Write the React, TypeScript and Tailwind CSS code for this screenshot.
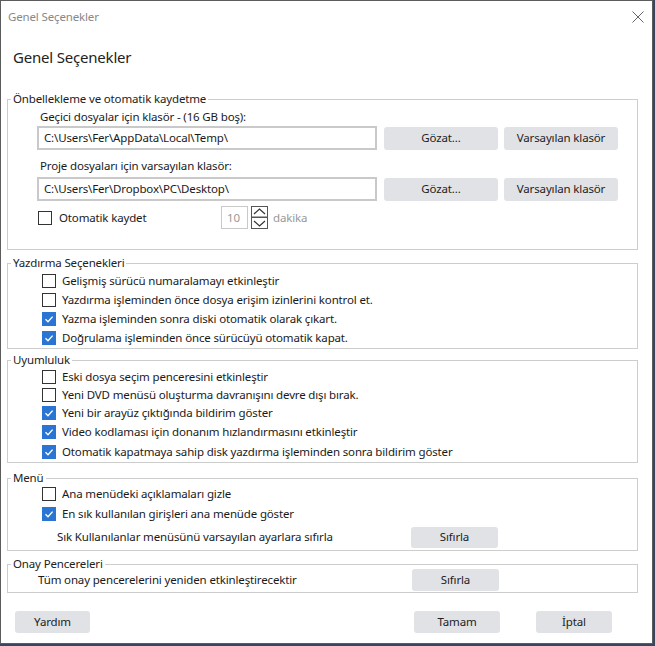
import React from "react";

function Check({ checked }: { checked?: boolean }) {
  if (checked) {
    return (
      <span className="w-[14px] h-[14px] bg-[#2a75d3] flex items-center justify-center shrink-0">
        <svg width="12" height="12" viewBox="0 0 12 12">
          <path d="M2.5 6.3 L5 8.7 L9.6 3.6" fill="none" stroke="#fff" strokeWidth="1.4" />
        </svg>
      </span>
    );
  }
  return <span className="w-[14px] h-[14px] border-[1.5px] border-[#333] bg-white shrink-0" />;
}

function Btn({ children, className }: { children: React.ReactNode; className?: string }) {
  return (
    <button
      className={
        "bg-[#e1e2e6] rounded-[3px] text-[11.5px] text-[#222] flex items-center justify-center shrink-0 " +
        (className ?? "")
      }
    >
      {children}
    </button>
  );
}

function Group({
  title,
  children,
  className,
}: {
  title: string;
  children: React.ReactNode;
  className?: string;
}) {
  return (
    <fieldset className={"ml-[6px] w-[631px] border border-[#cdcdcd] " + (className ?? "")}>
      <legend className="ml-[3px] px-[2px] text-[11.5px] leading-[16px] text-[#222]">{title}</legend>
      {children}
    </fieldset>
  );
}

function CheckRow({ label, checked, h }: { label: string; checked?: boolean; h: string }) {
  return (
    <div className={"flex items-center gap-[6px] ml-[34px] " + h}>
      <Check checked={checked} />
      <span className="text-[11.5px] text-[#1a1a1a] whitespace-nowrap">{label}</span>
    </div>
  );
}

export default function App() {
  return (
    <div className="w-[655px] h-[646px] bg-[#3a4660] font-['Noto_Sans',sans-serif] tracking-[-0.15px]">
      <div className="w-[653px] h-[644px] bg-white border border-[#5c5c5c] flex flex-col">
        {/* title bar */}
        <div className="h-[31px] flex items-center justify-between pl-[7px] pr-[8px]">
          <span className="text-[11.5px] text-[#888]">Genel Seçenekler</span>
          <svg width="12" height="12" viewBox="0 0 12 12">
            <path d="M0.5 0.5 L11.5 11.5 M11.5 0.5 L0.5 11.5" stroke="#666" strokeWidth="1" />
          </svg>
        </div>

        <div className="mt-[14px] ml-[12px] h-[22px] leading-[22px] text-[15px] tracking-[-0.2px] text-[#222]">
          Genel Seçenekler
        </div>

        <Group title="Önbellekleme ve otomatik kaydetme" className="mt-[23px] pb-[20px]">
          <div className="mt-[2px] ml-[32px] text-[11.5px] leading-[16px] text-[#1a1a1a]">
            Geçici dosyalar için klasör - (16 GB boş):
          </div>
          <div className="mt-[1px] flex items-center">
            <div className="ml-[29px] w-[340px] h-[24px] border-2 border-[#c9c9c9] flex items-center pl-[5px] text-[11.5px] text-[#1a1a1a]">
              C:\Users\Fer\AppData\Local\Temp\
            </div>
            <Btn className="ml-[7px] w-[114px] h-[23px]">Gözat...</Btn>
            <Btn className="ml-[6px] w-[114px] h-[23px]">Varsayılan klasör</Btn>
          </div>
          <div className="mt-[8px] ml-[32px] text-[11.5px] leading-[16px] text-[#1a1a1a]">
            Proje dosyaları için varsayılan klasör:
          </div>
          <div className="mt-[3px] flex items-center">
            <div className="ml-[29px] w-[340px] h-[24px] border-2 border-[#c9c9c9] flex items-center pl-[5px] text-[11.5px] text-[#1a1a1a]">
              C:\Users\Fer\Dropbox\PC\Desktop\
            </div>
            <Btn className="ml-[7px] w-[114px] h-[23px]">Gözat...</Btn>
            <Btn className="ml-[6px] w-[114px] h-[23px]">Varsayılan klasör</Btn>
          </div>
          <div className="mt-[5px] h-[23px] flex items-center">
            <div className="ml-[30px] w-[183px] flex items-center gap-[7px]">
              <Check />
              <span className="text-[11.5px] text-[#1a1a1a]">Otomatik kaydet</span>
            </div>
            <div className="w-[27px] h-[23px] border border-[#c9c9c9] flex items-center pl-[5px] text-[11.5px] text-[#999]">
              10
            </div>
            <svg className="ml-[3px]" width="17" height="23" viewBox="0 0 17 23">
              <rect x="0.5" y="0.5" width="16" height="10.5" fill="#fff" stroke="#555" />
              <rect x="0.5" y="11.5" width="16" height="11" fill="#fff" stroke="#555" />
              <path d="M3 8 L8.5 3 L14 8" fill="none" stroke="#333" strokeWidth="1.2" />
              <path d="M3 15 L8.5 20 L14 15" fill="none" stroke="#333" strokeWidth="1.2" />
            </svg>
            <span className="ml-[5px] text-[11.5px] text-[#999]">dakika</span>
          </div>
        </Group>

        <Group title="Yazdırma Seçenekleri" className="mt-[5px] pb-[1px]">
          <CheckRow h="h-[19px]" label="Gelişmiş sürücü numaralamayı etkinleştir" />
          <CheckRow h="h-[19px]" label="Yazdırma işleminden önce dosya erişim izinlerini kontrol et." />
          <CheckRow h="h-[19px]" checked label="Yazma işleminden sonra diski otomatik olarak çıkart." />
          <CheckRow h="h-[19px]" checked label="Doğrulama işleminden önce sürücüyü otomatik kapat." />
        </Group>

        <Group title="Uyumluluk" className="mt-[3px]">
          <CheckRow h="h-[18px]" label="Eski dosya seçim penceresini etkinleştir" />
          <CheckRow h="h-[18px]" label="Yeni DVD menüsü oluşturma davranışını devre dışı bırak." />
          <CheckRow h="h-[18px]" checked label="Yeni bir arayüz çıktığında bildirim göster" />
          <CheckRow h="h-[19px]" checked label="Video kodlaması için donanım hızlandırmasını etkinleştir" />
          <CheckRow h="h-[21px]" checked label="Otomatik kapatmaya sahip disk yazdırma işleminden sonra bildirim göster" />
        </Group>

        <Group title="Menü" className="mt-[7px] pb-[2px]">
          <CheckRow h="h-[15px]" label="Ana menüdeki açıklamaları gizle" />
          <CheckRow h="h-[25px]" checked label="En sık kullanılan girişleri ana menüde göster" />
          <div className="h-[22px] flex items-center">
            <span className="ml-[49px] w-[354px] text-[11.5px] text-[#1a1a1a]">
              Sık Kullanılanlar menüsünü varsayılan ayarlara sıfırla
            </span>
            <Btn className="w-[87px] h-[21px]">Sıfırla</Btn>
          </div>
        </Group>

        <Group title="Onay Pencereleri" className="mt-[5px] pb-[1px]">
          <div className="mt-[-3px] h-[22px] flex items-center">
            <span className="ml-[30px] w-[374px] text-[11.5px] text-[#1a1a1a]">
              Tüm onay pencerelerini yeniden etkinleştirecektir
            </span>
            <Btn className="w-[87px] h-[22px]">Sıfırla</Btn>
          </div>
        </Group>

        <div className="mt-[18px] flex items-center">
          <Btn className="ml-[14px] w-[75px] h-[22px]">Yardım</Btn>
          <Btn className="ml-[324px] w-[86px] h-[22px]">Tamam</Btn>
          <Btn className="ml-[36px] w-[76px] h-[22px]">İptal</Btn>
        </div>
      </div>
    </div>
  );
}
